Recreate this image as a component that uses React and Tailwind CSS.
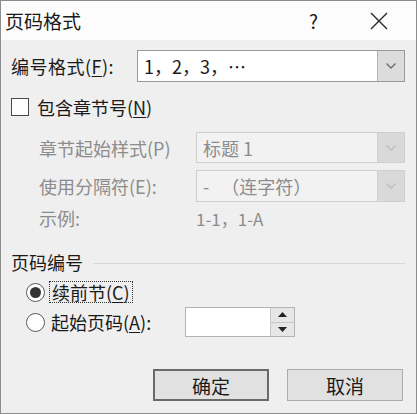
import React from 'react';

const font = { fontFamily: '"Noto Sans CJK SC", "Noto Sans", sans-serif' };

const Chevron = ({ color = '#555' }) => (
  <svg width="12" height="8" viewBox="0 0 12 8">
    <path d="M1.5 1.5 L6 6 L10.5 1.5" fill="none" stroke={color} strokeWidth="1.3" />
  </svg>
);

const Combo = ({ value, disabled }) => (
  <div
    className={`flex-1 h-full flex border ${
      disabled ? 'border-[#cfcfcf] bg-[#f2f2f2] text-[#8c8c8c]' : 'border-[#9a9a9a] bg-white text-[#1a1a1a]'
    }`}
  >
    <div className="flex-1 flex items-center pl-[6px] text-[18px] leading-none">{value}</div>
    <div
      className={`w-[27px] flex items-center justify-center border-l ${
        disabled ? 'bg-[#d9d9d9] border-[#cfcfcf]' : 'bg-[#dcdcdc] border-[#b0b0b0]'
      }`}
    >
      <Chevron color={disabled ? '#bdbdbd' : '#6a6a6a'} />
    </div>
  </div>
);

const Radio = ({ checked }) => (
  <div className="w-[19px] h-[19px] rounded-full border border-[#5a5a5a] bg-white flex items-center justify-center">
    {checked && <div className="w-[11px] h-[11px] rounded-full bg-[#333]" />}
  </div>
);

const U = ({ children }) => <span className="underline underline-offset-2">{children}</span>;

export default function App() {
  return (
    <div
      style={font}
      className="w-[417px] h-[414px] border border-[#8c8c8c] bg-[#efefef] flex flex-col text-[#1a1a1a] overflow-hidden"
    >
      {/* title bar */}
      <div className="h-[39px] bg-[#fcfcfc] flex items-center pl-[4px] shrink-0">
        <span className="text-[19px] leading-none">页码格式</span>
        <span className="ml-auto text-[19px] leading-none mr-[52px]">?</span>
        <svg width="18" height="18" viewBox="0 0 18 18" className="mr-[28px]">
          <path d="M1 1 L17 17 M17 1 L1 17" stroke="#2a2a2a" strokeWidth="1.4" />
        </svg>
      </div>

      <div className="flex flex-col pl-[10px] pr-[11px]">
        {/* number format */}
        <div className="flex items-center h-[32px] mt-[10px]">
          <span className="w-[126px] text-[18px] leading-none tracking-[0.5px]">
            编号格式(<U>F</U>):
          </span>
          <Combo value="1，2，3，⋯" />
        </div>

        {/* include chapter */}
        <div className="flex items-center h-[20px] mt-[15px]">
          <div className="w-[18px] h-[18px] border border-[#4a4a4a] bg-white" />
          <span className="ml-[8px] text-[18px] leading-none">
            包含章节号(<U>N</U>)
          </span>
        </div>

        <div className="flex flex-col pl-[28px] text-[#8c8c8c]">
          <div className="flex items-center h-[31px] mt-[15px]">
            <span className="w-[157px] text-[18px] leading-none">章节起始样式(P)</span>
            <Combo value="标题 1" disabled />
          </div>
          <div className="flex items-center h-[32px] mt-[7px]">
            <span className="w-[157px] text-[18px] leading-none">使用分隔符(E):</span>
            <Combo value={<span>-&nbsp;&nbsp;&nbsp;（连字符）</span>} disabled />
          </div>
          <div className="flex items-center h-[22px] mt-[5px]">
            <span className="w-[157px] text-[18px] leading-none">示例:</span>
            <span className="text-[17px] leading-none">1-1，1-A</span>
          </div>
        </div>

        {/* page numbering */}
        <div className="flex items-center h-[24px] mt-[21px]">
          <span className="text-[18px] leading-none">页码编号</span>
          <div className="flex-1 h-px bg-[#d8d8d8] ml-[10px] mt-[2px]" />
        </div>

        <div className="flex items-center h-[24px] mt-[6px] pl-[15px]">
          <Radio checked />
          <span className="ml-[4px] px-[2px] py-[1px] border border-dotted border-[#333] text-[18px] leading-none">
            续前节(<U>C</U>)
          </span>
        </div>

        <div className="flex items-center h-[30px] mt-[3px] pl-[15px]">
          <Radio />
          <span className="ml-[6px] w-[134px] text-[18px] leading-none">
            起始页码(<U>A</U>):
          </span>
          <div className="w-[110px] h-[30px] flex border border-[#b4b4b4] bg-white">
            <div className="flex-1" />
            <div className="w-[24px] flex flex-col border-l border-[#c8c8c8] bg-[#e6e6e6]">
              <div className="flex-1 flex items-center justify-center border-b border-[#c8c8c8]">
                <svg width="9" height="5" viewBox="0 0 9 5"><path d="M0 5 L4.5 0 L9 5 Z" fill="#222" /></svg>
              </div>
              <div className="flex-1 flex items-center justify-center">
                <svg width="9" height="5" viewBox="0 0 9 5"><path d="M0 0 L4.5 5 L9 0 Z" fill="#222" /></svg>
              </div>
            </div>
          </div>
        </div>

        {/* buttons */}
        <div className="flex justify-end gap-[18px] mt-[32px] pr-[2px]">
          <button className="w-[116px] h-[32px] border-2 border-[#6a6a6a] bg-[#e1e1e1] text-[19px] leading-none" style={font}>
            确定
          </button>
          <button className="w-[116px] h-[32px] border border-[#adadad] bg-[#e1e1e1] text-[19px] leading-none" style={font}>
            取消
          </button>
        </div>
      </div>
    </div>
  );
}
